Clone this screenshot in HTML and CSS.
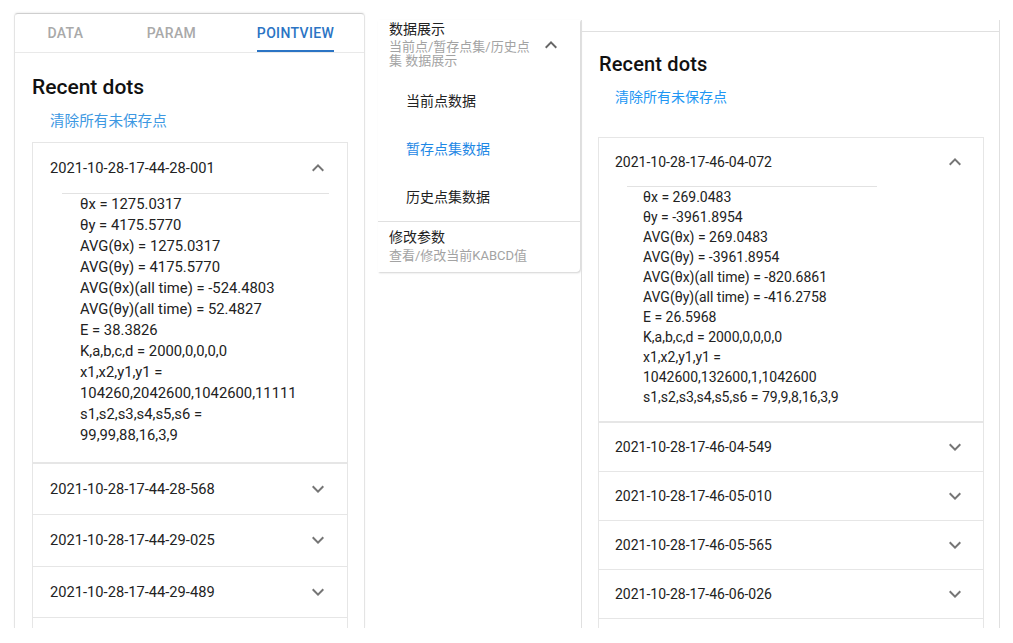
FILE: index.html
```html
<!DOCTYPE html>
<html lang="zh">
<head>
<meta charset="utf-8">
<title>Recent dots</title>
<link rel="stylesheet" href="styles.css">
</head>
<body>
<div class="page">
  <section class="phone">
    <nav class="tabs">
      <div class="tab"><span>DATA</span></div>
      <div class="tab"><span>PARAM</span></div>
      <div class="tab active"><span>POINTVIEW</span></div>
    </nav>
    <div class="phone-body">
      <h2 class="title">Recent dots</h2>
      <a class="link">清除所有未保存点</a>
      <div class="acc">
        <div class="item open">
          <div class="head"><span>2021-10-28-17-44-28-001</span><svg class="chev" viewBox="0 0 24 24"><path d="M12 8l-6 6 1.41 1.41L12 10.83l4.59 4.58L18 14z"/></svg></div>
          <div class="rule"></div>
          <div class="content">
            <div>θx = 1275.0317</div>
            <div>θy = 4175.5770</div>
            <div>AVG(θx) = 1275.0317</div>
            <div>AVG(θy) = 4175.5770</div>
            <div>AVG(θx)(all time) = -524.4803</div>
            <div>AVG(θy)(all time) = 52.4827</div>
            <div>E = 38.3826</div>
            <div>K,a,b,c,d = 2000,0,0,0,0</div>
            <div>x1,x2,y1,y1 =</div>
            <div>104260,2042600,1042600,11111</div>
            <div>s1,s2,s3,s4,s5,s6 =</div>
            <div>99,99,88,16,3,9</div>
          </div>
        </div>
        <div class="item"><div class="head"><span>2021-10-28-17-44-28-568</span><svg class="chev" viewBox="0 0 24 24"><path d="M16.59 8.59L12 13.17 7.41 8.59 6 10l6 6 6-6z"/></svg></div></div>
        <div class="item"><div class="head"><span>2021-10-28-17-44-29-025</span><svg class="chev" viewBox="0 0 24 24"><path d="M16.59 8.59L12 13.17 7.41 8.59 6 10l6 6 6-6z"/></svg></div></div>
        <div class="item"><div class="head"><span>2021-10-28-17-44-29-489</span><svg class="chev" viewBox="0 0 24 24"><path d="M16.59 8.59L12 13.17 7.41 8.59 6 10l6 6 6-6z"/></svg></div></div>
        <div class="item"><div class="head"></div></div>
      </div>
    </div>
  </section>

  <aside class="menu">
    <div class="menu-head">
      <div class="menu-text">
        <div class="menu-title">数据展示</div>
        <div class="menu-sub">当前点/暂存点集/历史点集 数据展示</div>
      </div>
      <svg class="menu-chev" viewBox="0 0 24 24"><path d="M12 8l-6 6 1.41 1.41L12 10.83l4.59 4.58L18 14z"/></svg>
    </div>
    <div class="menu-item">当前点数据</div>
    <div class="menu-item active">暂存点集数据</div>
    <div class="menu-item">历史点集数据</div>
    <div class="menu-head second">
      <div class="menu-text">
        <div class="menu-title">修改参数</div>
        <div class="menu-sub">查看/修改当前KABCD值</div>
      </div>
    </div>
  </aside>

  <section class="desk">
    <div class="desk-top"></div>
    <div class="desk-body">
      <h2 class="title">Recent dots</h2>
      <a class="link">清除所有未保存点</a>
      <div class="acc">
        <div class="item open">
          <div class="head"><span>2021-10-28-17-46-04-072</span><svg class="chev" viewBox="0 0 24 24"><path d="M12 8l-6 6 1.41 1.41L12 10.83l4.59 4.58L18 14z"/></svg></div>
          <div class="rule"></div>
          <div class="content">
            <div>θx = 269.0483</div>
            <div>θy = -3961.8954</div>
            <div>AVG(θx) = 269.0483</div>
            <div>AVG(θy) = -3961.8954</div>
            <div>AVG(θx)(all time) = -820.6861</div>
            <div>AVG(θy)(all time) = -416.2758</div>
            <div>E = 26.5968</div>
            <div>K,a,b,c,d = 2000,0,0,0,0</div>
            <div>x1,x2,y1,y1 =</div>
            <div>1042600,132600,1,1042600</div>
            <div>s1,s2,s3,s4,s5,s6 = 79,9,8,16,3,9</div>
          </div>
        </div>
        <div class="item"><div class="head"><span>2021-10-28-17-46-04-549</span><svg class="chev" viewBox="0 0 24 24"><path d="M16.59 8.59L12 13.17 7.41 8.59 6 10l6 6 6-6z"/></svg></div></div>
        <div class="item"><div class="head"><span>2021-10-28-17-46-05-010</span><svg class="chev" viewBox="0 0 24 24"><path d="M16.59 8.59L12 13.17 7.41 8.59 6 10l6 6 6-6z"/></svg></div></div>
        <div class="item"><div class="head"><span>2021-10-28-17-46-05-565</span><svg class="chev" viewBox="0 0 24 24"><path d="M16.59 8.59L12 13.17 7.41 8.59 6 10l6 6 6-6z"/></svg></div></div>
        <div class="item"><div class="head"><span>2021-10-28-17-46-06-026</span><svg class="chev" viewBox="0 0 24 24"><path d="M16.59 8.59L12 13.17 7.41 8.59 6 10l6 6 6-6z"/></svg></div></div>
        <div class="item"><div class="head"></div></div>
      </div>
    </div>
  </section>
</div>
</body>
</html>
```
FILE: styles.css
```css
* { box-sizing: border-box; }
html, body {
  margin: 0;
  padding: 0;
  background: #fff;
  width: 1013px;
  height: 643px;
  overflow: hidden;
  font-family: Roboto, "Noto Sans CJK SC", sans-serif;
  color: rgba(0, 0, 0, 0.87);
}
.page {
  display: flex;
  align-items: flex-start;
  padding-left: 14px;
}
.title { margin: 0; font-weight: 500; }
.link { display: block; color: #2196f3; cursor: pointer; }

/* ---------- left (phone) panel ---------- */
.phone {
  width: 351px;
  height: 615px;
  overflow: hidden;
  margin-top: 13px;
  border: 1px solid #e4e4e4;
  border-top-color: #cfcfcf;
  border-bottom: none;
  border-radius: 4px 4px 0 0;
  box-shadow: 0 -1px 2px rgba(0, 0, 0, 0.06);
}
.tabs {
  display: grid;
  grid-template-columns: 101px 111px 1fr;
  height: 39px;
  border-bottom: 1px solid #e9e9e9;
}
.tab {
  display: flex;
  justify-content: center;
  font-size: 14px;
  font-weight: 500;
  letter-spacing: 0.35px;
  color: #a9a9a9;
}
.tab span {
  display: flex;
  align-items: center;
  height: 38px;
  padding-top: 1px;
  border-bottom: 2px solid transparent;
}
.tab.active { color: #2b74c4; }
.tab.active span { border-bottom-color: #2b74c4; }

.phone-body { padding: 0 16px 0 17px; }
.phone .title {
  font-size: 21px;
  line-height: 28px;
  margin-top: 20px;
  color: #111;
}
.phone .link {
  font-size: 14.6px;
  line-height: 20px;
  margin: 10px 0 0 18px;
  color: #3d98e2;
}
.phone .acc { margin-top: 11px; }

.acc {
  border: 1px solid #e6e6e6;
  border-bottom: none;
}
.item { border-top: 1px solid #e6e6e6; }
.item:first-child { border-top: none; }
.item.open + .item { border-top: 2px solid #e6e6e6; }
.head {
  display: flex;
  align-items: center;
  justify-content: space-between;
}
.chev { width: 24px; height: 24px; fill: rgba(0, 0, 0, 0.54); flex: none; }
.rule { border-top: 1px solid #e2e2e2; }

.phone .head {
  height: 50.5px;
  padding: 0 17px 0 17px;
  font-size: 14.7px;
  color: #222;
}
.phone .item.open .head { height: 49.5px; }
.phone .rule { margin: 0 18px 0 29px; }
.phone .content {
  padding: 0 0 16px 47px;
  font-size: 14.8px;
  line-height: 21px;
  color: #222;
}

/* ---------- middle menu ---------- */
.menu {
  width: 202px;
  margin: 20px 0 0 13px;
  background: #fff;
  border-radius: 0 0 4px 0;
  box-shadow: 1px 1px 2px rgba(0, 0, 0, 0.18);
}
.menu-head {
  display: flex;
  align-items: center;
  justify-content: space-between;
  padding: 0 17px 9px 11px;
}
.menu-head.second {
  padding-top: 6px;
  border-top: 1px solid #e0e0e0;
}
.menu-text { width: 146px; }
.menu-title {
  font-size: 14px;
  line-height: 18px;
  color: #222;
}
.menu-sub {
  font-size: 13px;
  line-height: 14px;
  margin-top: 2px;
  color: #a3a3a3;
}
.menu-head.second .menu-sub { margin-top: 3px; }
.menu-chev {
  width: 24px;
  height: 24px;
  fill: rgba(0, 0, 0, 0.6);
  margin-top: 2px;
  flex: none;
}
.menu-item {
  height: 48px;
  line-height: 48px;
  padding-left: 28px;
  font-size: 14px;
  color: #222;
}
.menu-item.active { color: #1e88e5; }

/* ---------- right (desktop) panel ---------- */
.desk {
  width: 419px;
  height: 608px;
  overflow: hidden;
  margin: 20px 0 0 1px;
  border-left: 1px solid #e0e0e0;
  border-right: 1px solid #e0e0e0;
}
.desk-top {
  height: 12px;
  border-bottom: 1px solid #e0e0e0;
}
.desk-body { padding: 0 15px 0 16px; }
.desk .title {
  font-size: 20px;
  line-height: 32px;
  margin: 16px 0 0 1px;
  letter-spacing: 0.15px;
  color: #111;
}
.desk .link {
  font-size: 14px;
  line-height: 20px;
  margin: 7px 0 0 17px;
}
.desk .acc { margin-top: 30px; }
.desk .head {
  height: 48px;
  padding: 0 16px 0 16px;
  font-size: 14px;
  color: #222;
}
.desk .rule { margin: 0 0 0 28px; width: 250px; }
.desk .content {
  padding: 0 0 14px 44px;
  font-size: 14px;
  line-height: 20px;
  color: #222;
}
```
